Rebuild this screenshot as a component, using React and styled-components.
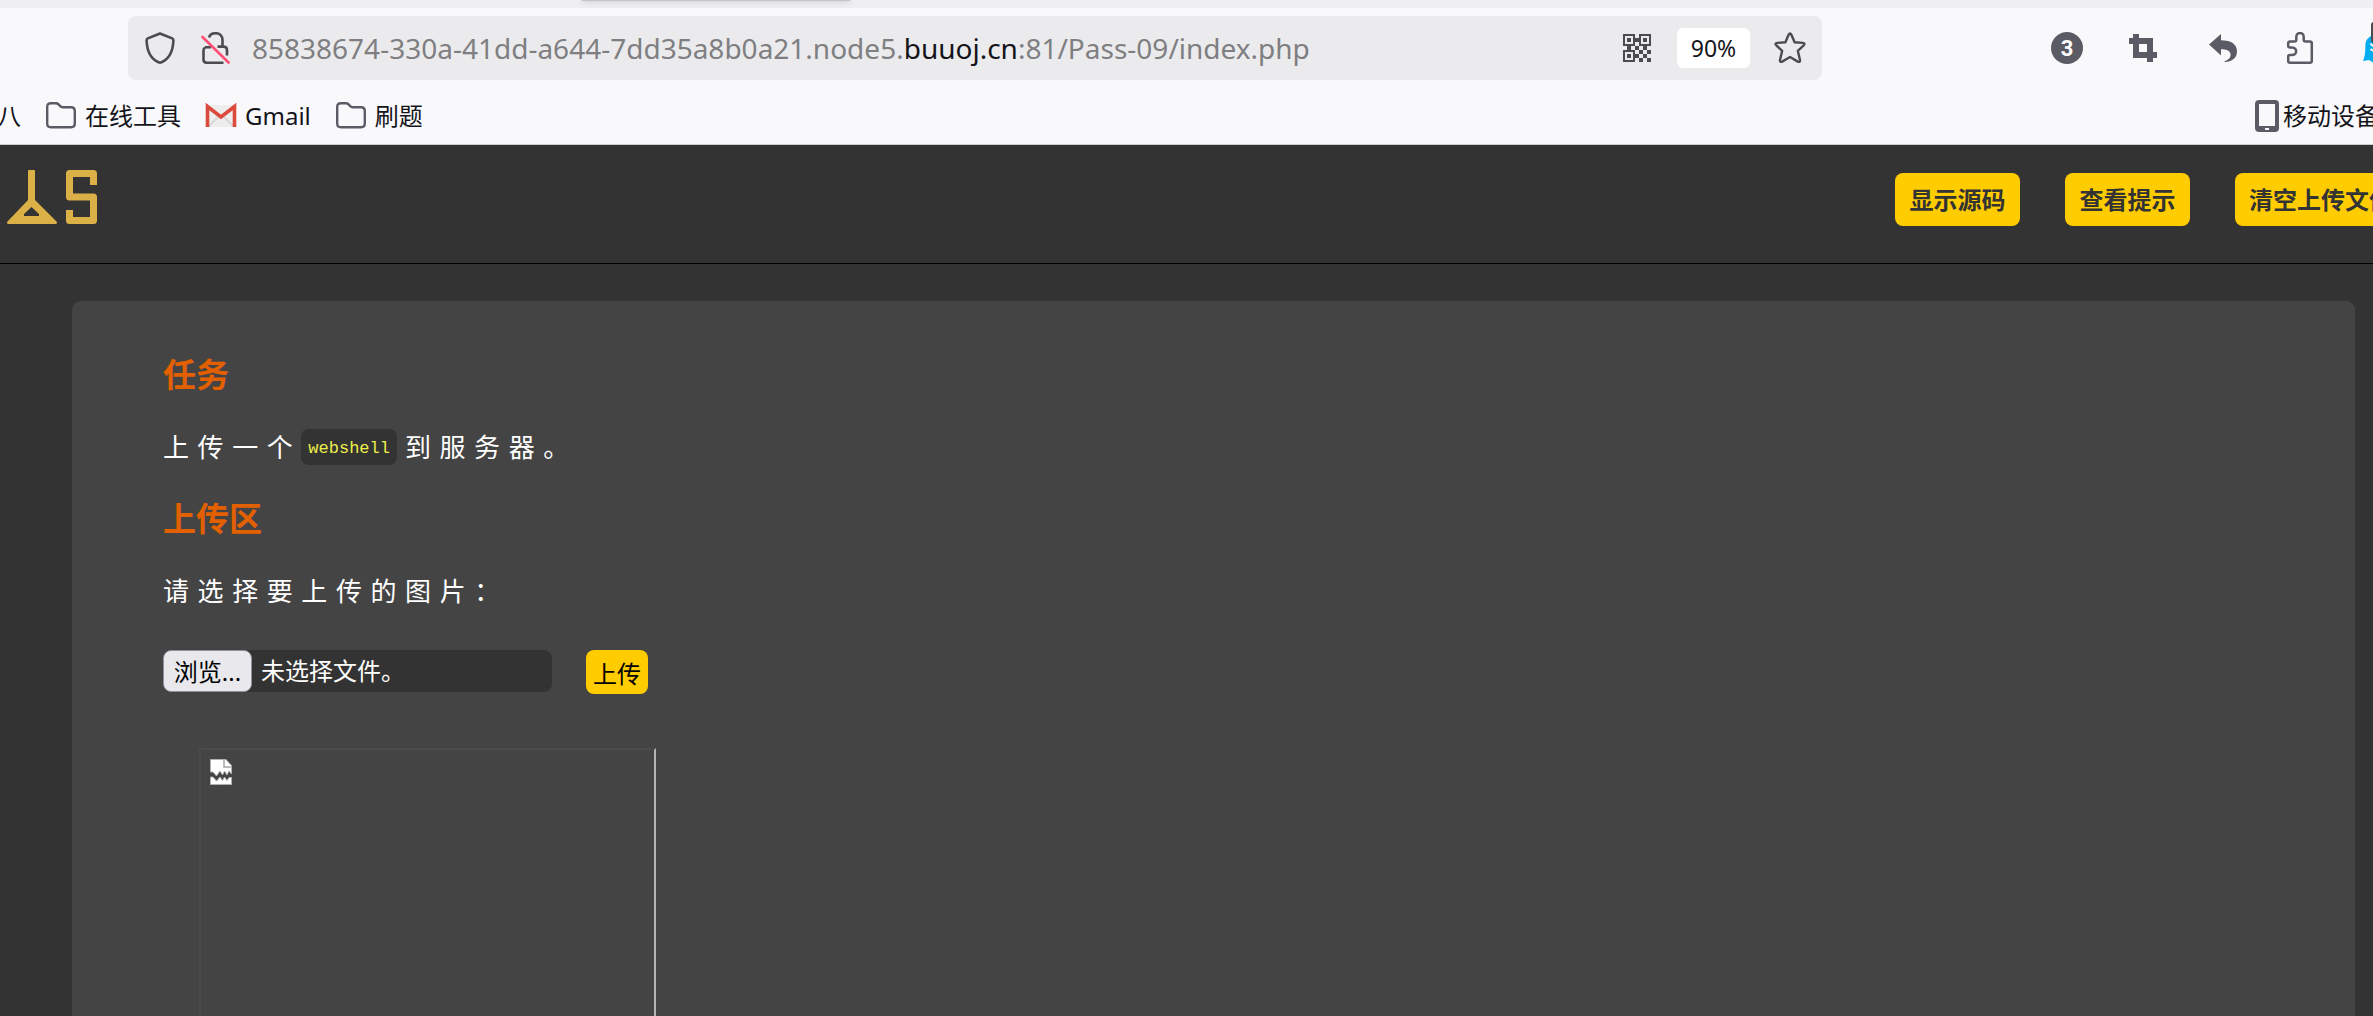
import styled, { createGlobalStyle, css } from "styled-components";

const headerActions = ["显示源码", "查看提示", "清空上传文件"];

export default function App() {
  return (
    <Window>
      <GlobalStyle />
      <BrowserChrome />
      <Page>
        <PageHeader />
        <UploadCard />
      </Page>
    </Window>
  );
}

function BrowserChrome() {
  return (
    <Chrome>
      <TabStrip>
        <TabEdge />
      </TabStrip>
      <NavBar>
        <AddressBar>
          <SiteInfo>
            <ShieldIcon />
            <InsecureIcon />
          </SiteInfo>
          <Address href="#url">
            85838674-330a-41dd-a644-7dd35a8b0a21.node5.<b>buuoj.cn</b>
            :81/Pass-09/index.php
          </Address>
          <SiteInfo>
            <QrIcon />
            <ZoomButton type="button">90%</ZoomButton>
            <StarIcon />
          </SiteInfo>
        </AddressBar>
        <Tools>
          <CounterIcon />
          <CropIcon />
          <UndoIcon />
          <PuzzleIcon />
          <GhostIcon />
        </Tools>
      </NavBar>
      <Bookmarks>
        <BookmarkGroup>
          <Bookmark href="#ba">八</Bookmark>
          <Bookmark href="#tools">
            <FolderIcon />
            在线工具
          </Bookmark>
          <Bookmark href="#gmail">
            <GmailIcon />
            Gmail
          </Bookmark>
          <Bookmark href="#practice">
            <FolderIcon />
            刷题
          </Bookmark>
        </BookmarkGroup>
        <MobileBookmarks>
          <Bookmark href="#mobile" $tight>
            <PhoneIcon />
            移动设备
          </Bookmark>
        </MobileBookmarks>
      </Bookmarks>
    </Chrome>
  );
}

function PageHeader() {
  return (
    <Header>
      <Logo />
      <Actions>
        {headerActions.map((label) => (
          <ActionButton type="button" key={label}>
            {label}
          </ActionButton>
        ))}
      </Actions>
    </Header>
  );
}

function UploadCard() {
  return (
    <Card>
      <Title>任务</Title>
      <Paragraph>
        上传一个<Code>webshell</Code>到服务器。
      </Paragraph>
      <Title>上传区</Title>
      <Paragraph>请选择要上传的图片：</Paragraph>
      <UploadForm onSubmit={(e) => e.preventDefault()}>
        <FileField htmlFor="upload_file">
          <FileInput type="file" id="upload_file" />
          <Browse>浏览...</Browse>
          <span>未选择文件。</span>
        </FileField>
        <SubmitButton type="submit">上传</SubmitButton>
      </UploadForm>
      <Preview>
        <BrokenImageIcon />
      </Preview>
    </Card>
  );
}

const ShieldIcon = () => (
  <Icon width="32" height="32" viewBox="0 0 32 32">
    <path
      d="M16 1.500 28.200 6.400Q29.500 7 29.400 8.500C29 19 25 27 17.400 30.300Q16 31 14.600 30.300C7 27 3 19 2.600 8.500Q2.500 7 3.800 6.400Z"
      fill="none"
      stroke="#4b4b50"
      strokeWidth="2.6"
      strokeLinejoin="round"
    />
  </Icon>
);

const InsecureIcon = () => (
  <Icon width="32" height="32" viewBox="0 0 32 32">
    <path
      d="M9 5.500C10 2.500 12.500 1.200 15.500 1.200C20 1.200 22.500 4 22.500 8V14.500M5 15.500C4 16.200 3.500 17 3.500 18.500V27.500Q3.500 30.800 7 30.800H23.500M17.500 14.600H23.500Q27 14.600 27 18V23.500M5 15.300H11"
      fill="none"
      stroke="#4b4b50"
      strokeWidth="2.6"
    />
    <path d="M2.500 5 28.500 30.500" stroke="#ff4f75" strokeWidth="2.6" strokeLinecap="round" />
  </Icon>
);

const QrIcon = () => (
  <Icon width="32" height="28" viewBox="-1 0 16 14" shapeRendering="crispEdges">
    <g fill="none" stroke="#4b4b50">
      <rect x="0.5" y="0.5" width="5" height="5" />
      <rect x="8.5" y="0.5" width="5" height="5" />
      <rect x="0.5" y="8.5" width="5" height="5" />
    </g>
    <path
      d="M2 2h2v2h-2zM10 2h2v2h-2zM2 10h2v2h-2zM6 2h2v2h-2zM2 6h2v2h-2zM6 6h2v2h-2zM10 6h2v2h-2zM4 8h2v1h-2zM8 8h2v2h-2zM12 8h2v2h-2zM6 10h2v2h-2zM10 10h2v2h-2zM8 12h2v2h-2zM12 12h2v2h-2z"
      fill="#4b4b50"
    />
  </Icon>
);

const StarIcon = () => (
  <Icon width="32" height="32" viewBox="0 0 32 32">
    <path
      d="M14.700 2.600Q16 .4 17.300 2.600L20.600 10.200 28.800 10.900Q31.500 11.300 29.700 13.300L23.800 18.800 26 28Q26.300 30.600 23.800 29.600L16 25 8.200 29.600Q5.700 30.600 6 28L8.200 18.800 2.300 13.300Q.5 11.300 3.200 10.900L11.400 10.200Z"
      fill="none"
      stroke="#4b4b50"
      strokeWidth="2.4"
      strokeLinejoin="round"
    />
  </Icon>
);

const CounterIcon = () => (
  <Icon width="32" height="32" viewBox="0 0 32 32">
    <circle cx="16" cy="16" r="16" fill="#5b5b66" />
    <text
      x="16"
      y="24"
      fill="#fff"
      fontFamily="Roboto, sans-serif"
      fontSize="22"
      fontWeight="700"
      textAnchor="middle"
    >
      3
    </text>
  </Icon>
);

const CropIcon = () => (
  <Icon width="32" height="32" viewBox="0 0 32 32" shapeRendering="crispEdges">
    <path
      d="M4 2h6v4h14v14h4v6h-4v4h-6v-4h-14v-14h-4v-6h4zM10 12v8h8v-8z"
      fill="#5b5b66"
      fillRule="evenodd"
    />
  </Icon>
);

const UndoIcon = () => (
  <Icon width="32" height="32" viewBox="0 0 32 32">
    <path
      d="M2 12.500 14 2V8.200C24 8.200 30 12 30 19.500C30 26 25 29.800 17.500 30V29.200C21.500 28 24 25.500 23.500 22C23 18.500 19 17.200 14 17.200V23.500Z"
      fill="#5b5b66"
    />
  </Icon>
);

const PuzzleIcon = () => (
  <Icon width="32" height="32" viewBox="0 0 32 32">
    <path
      d="M3.200 14V11.500Q3.200 9.500 5.200 9.500H9.500Q11.300 9.500 11.300 7.700V4.800C11.300 -.3 18.700 -.3 18.700 4.800V7.700Q18.700 9.500 20.500 9.500H24.800Q26.800 9.500 26.800 11.500V28.700Q26.800 30.700 24.800 30.700H5.200Q3.200 30.700 3.200 28.700V24.500Q3.200 23 5 23H7C12.500 23 12.500 15.500 7 15.500H5Q3.200 15.500 3.200 14Z"
      fill="none"
      stroke="#5b5b66"
      strokeWidth="2.5"
    />
  </Icon>
);

const GhostIcon = () => (
  <Icon width="32" height="54" viewBox="0 -11 32 54">
    <path
      d="M0 29C3 22 2 17 2.500 12C3.500 -1 28.500 -1 29.500 12C30 17 29 22 32 29L26 27 22 30 16 27.500 10 30.500 6 28Z"
      fill="#00aef0"
    />
    <path d="M7.500 11.500Q9 14 12 14.500M7.500 17Q11 20 16 19" fill="none" stroke="#fff" strokeWidth="2" />
    <rect x="8" y="-10" width="24" height="21" rx="3" fill="#4b4b50" />
  </Icon>
);

const FolderIcon = () => (
  <Icon width="32" height="32" viewBox="0 0 32 32">
    <path
      d="M2.200 7Q2.200 3.200 6 3.200H11Q12.300 3.200 13.300 4.200L15.500 6.400Q16.300 7.200 17.500 7.200H26Q29.800 7.200 29.800 11V23.500Q29.800 27.200 26 27.200H6Q2.200 27.200 2.200 23.500Z"
      fill="none"
      stroke="#5b5b66"
      strokeWidth="2.4"
    />
  </Icon>
);

const GmailIcon = () => (
  <Icon width="32" height="32" viewBox="0 0 32 32">
    <rect x="1" y="5" width="30" height="22" rx="2" fill="#eeeded" />
    <path d="M4 26 13 17M28 26 19 17" stroke="#d9d7d7" strokeWidth="2" />
    <path d="M2.500 27V6.500L16 17 29.500 6.500V27" fill="none" stroke="#dc4a3d" strokeWidth="3.6" />
  </Icon>
);

const PhoneIcon = () => (
  <Icon width="24" height="32" viewBox="0 0 24 32">
    <path
      d="M4 0H20Q24 0 24 4V28Q24 32 20 32H4Q0 32 0 28V4Q0 0 4 0ZM4 4V26H20V4ZM10 28V30H14V28Z"
      fill="#5b5b66"
      fillRule="evenodd"
    />
  </Icon>
);

const Logo = () => (
  <Icon width="92" height="54" viewBox="0 0 92 54">
    <path
      d="M21 1Q21 0 22 0H27Q28 0 28 1V30L50 52Q50 54 49 54H1Q0 54 0 52L21 30ZM24.500 37 17 44V46H32V44Z"
      fill="#dbb047"
      fillRule="evenodd"
    />
    <path
      d="M86.500 15V3.500H62.500V27H86.500V50.500H62.500V40"
      fill="none"
      stroke="#dbb047"
      strokeWidth="7"
      strokeLinejoin="round"
    />
  </Icon>
);

const BrokenImageIcon = () => (
  <Icon width="22" height="26" viewBox="0 0 22 26" role="img" aria-label="图片">
    <path d="M.5 .5H16L21.500 6.500V15L19 12 17 16 14.500 12 12.500 16 10 12 6.500 17 3 13H.5Z" fill="#fff" stroke="#b0b0b0" />
    <path d="M14 .5V8H21.500" fill="none" stroke="#a8a8a8" strokeWidth="1.5" />
    <path d="M.5 18 3 18 6.500 22 10 18 12.500 21.500 14.500 18 17 21.500 19 18.500H21.500V25.500H.5Z" fill="#fff" stroke="#b0b0b0" />
  </Icon>
);

const GlobalStyle = createGlobalStyle`
  * {
    box-sizing: border-box;
  }
  body {
    margin: 0;
    background: #333;
    font-family: "Noto Sans", "Noto Sans CJK SC", sans-serif;
    font-size: 24px;
  }
  button {
    border: 0;
    font-family: inherit;
    cursor: pointer;
  }
  a {
    color: inherit;
    text-decoration: none;
  }
`;

const Icon = styled.svg`
  display: block;
  flex: none;
`;

const Window = styled.div`
  display: flex;
  flex-direction: column;
  height: 100vh;
  overflow: hidden;
`;

const Chrome = styled.div`
  flex: none;
  background: #f9f9fb;
  border-bottom: 1px solid #ccc;
  color: #15141a;
`;

const TabStrip = styled.div`
  height: 8px;
  padding-left: 582px;
  background: #f0f0f4;
  overflow: hidden;
`;

const TabEdge = styled.div`
  width: 268px;
  height: 1px;
  background: #c4c4c8;
  box-shadow: 0 0 6px rgba(0, 0, 0, 0.5);
`;

const NavBar = styled.div`
  display: flex;
  align-items: center;
  height: 80px;
  padding: 8px 0 8px 128px;
`;

const AddressBar = styled.div`
  flex: 1;
  display: flex;
  align-items: center;
  height: 64px;
  padding: 0 16px;
  gap: 20px;
  border-radius: 8px;
  background: #ebebed;
`;

const SiteInfo = styled.div`
  display: flex;
  align-items: center;
  gap: 24px;
`;

const Address = styled.a`
  flex: 1;
  font-size: 28px;
  line-height: 40px;
  white-space: nowrap;
  color: #7f7f82;
  b {
    font-weight: 400;
    color: #15141a;
  }
`;

const ZoomButton = styled.button`
  width: 73px;
  height: 40px;
  padding: 0;
  border-radius: 6px;
  background: #fff;
  color: #15141a;
  font-size: 23px;
`;

const Tools = styled.div`
  flex: none;
  display: flex;
  align-items: center;
  gap: 46px;
  width: 322px;
  margin-left: 229px;
  overflow: hidden;
`;

const Bookmarks = styled.div`
  display: flex;
  align-items: center;
  justify-content: space-between;
  height: 56px;
  line-height: 32px;
`;

const BookmarkGroup = styled.div`
  display: flex;
  gap: 24px;
  margin-left: -3px;
`;

const MobileBookmarks = styled.div`
  width: 118px;
  overflow: hidden;
`;

const Bookmark = styled.a`
  display: flex;
  align-items: center;
  gap: ${({ $tight }) => ($tight ? 4 : 8)}px;
  white-space: nowrap;
`;

const Page = styled.main`
  flex: 1;
  display: flex;
  flex-direction: column;
  min-height: 0;
  background: #333;
`;

const Header = styled.header`
  flex: none;
  display: flex;
  align-items: flex-start;
  justify-content: space-between;
  height: 119px;
  padding: 25px 0 0 7px;
  border-bottom: 1px solid #000;
`;

const Actions = styled.nav`
  display: flex;
  gap: 45px;
  width: 478px;
  padding-top: 3px;
  overflow: hidden;
`;

const yellowButton = css`
  flex: none;
  border-radius: 8px;
  background: #fc0;
  font-size: 24px;
  white-space: nowrap;
`;

const ActionButton = styled.button`
  ${yellowButton}
  min-width: 125px;
  height: 53px;
  padding: 0 14px 2px;
  color: #333;
  font-weight: 700;
`;

const Card = styled.section`
  flex: 1;
  display: flex;
  flex-direction: column;
  min-height: 0;
  margin: 37px 18px 0 72px;
  padding: 52px 91px 0;
  border-radius: 9px 9px 0 0;
  background: #444;
  color: #fff;
`;

const Title = styled.h3`
  margin: 0 0 30px;
  color: #e36000;
  font-size: 33px;
  font-weight: 700;
  line-height: 44px;
`;

const Paragraph = styled.p`
  display: flex;
  align-items: center;
  height: 40px;
  margin: 0 0 30px;
  font-size: 26px;
  line-height: 40px;
  letter-spacing: 0.33em;
`;

const Code = styled.code`
  height: 36px;
  margin-right: 8px;
  padding: 0 7px;
  border-radius: 8px;
  background: #333;
  color: #eeee4a;
  font-family: "Liberation Mono", monospace;
  font-size: 17px;
  line-height: 40px;
  letter-spacing: 0;
`;

const UploadForm = styled.form`
  display: flex;
  gap: 34px;
  margin-top: 9px;
`;

const FileField = styled.label`
  position: relative;
  display: flex;
  align-items: center;
  gap: 9px;
  width: 389px;
  height: 42px;
  border-radius: 8px;
  background: #333;
  line-height: 42px;
`;

const FileInput = styled.input`
  position: absolute;
  width: 100%;
  height: 100%;
  opacity: 0;
`;

const Browse = styled.span`
  width: 89px;
  height: 42px;
  border: 1px solid #8f8f9d;
  border-radius: 8px;
  background: #e9e9ed;
  color: #000;
  text-align: center;
`;

const SubmitButton = styled.button`
  ${yellowButton}
  height: 44px;
  padding: 0 7px;
  color: #000;
`;

const Preview = styled.div`
  flex: 1;
  width: 457px;
  margin: 54px 0 0 36px;
  padding: 9px;
  border: 2px solid #4b4b4b;
  border-right-color: #b5b5b5;
  border-bottom: 0;
`;
